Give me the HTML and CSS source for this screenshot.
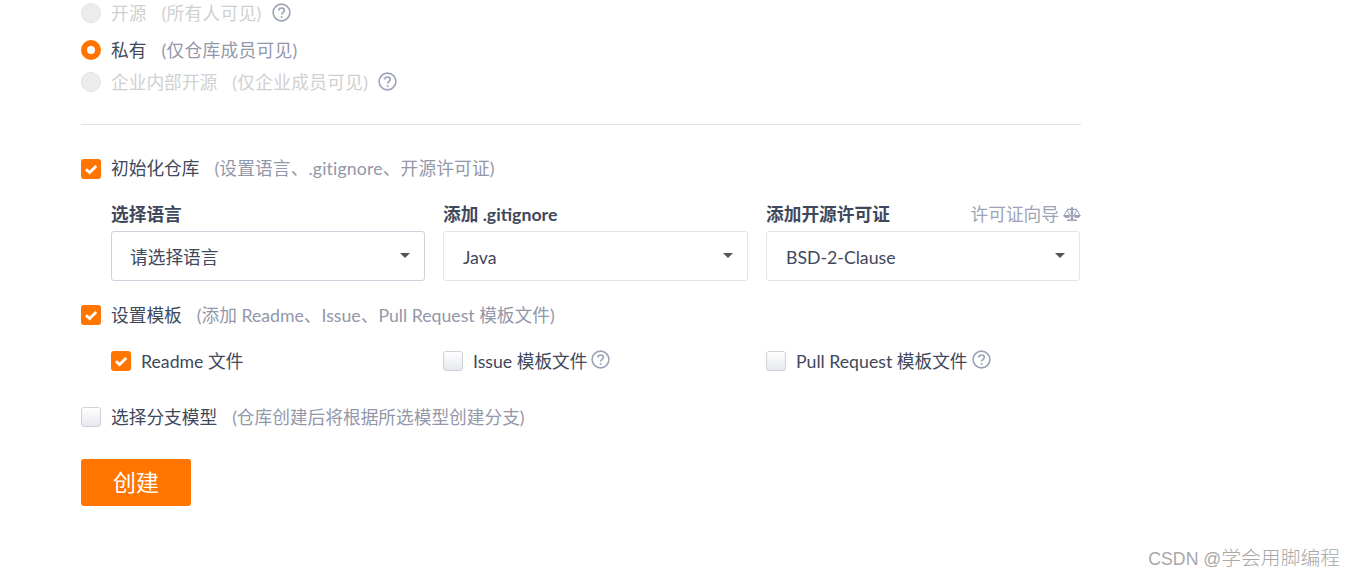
FILE: index.html
```html
<!DOCTYPE html>
<html lang="zh-CN">
<head>
<meta charset="utf-8">
<title>新建仓库</title>
<link rel="stylesheet" href="styles.css">
</head>
<body>
<svg class="defs" width="0" height="0" aria-hidden="true">
  <defs>
    <symbol id="help" viewBox="0 0 19 19">
      <circle cx="9.5" cy="9.5" r="8.4" fill="none" stroke="currentColor" stroke-width="1.6"/>
      <path d="M6.8 7.6c0-1.6 1.2-2.6 2.8-2.6s2.7 1 2.700 2.300c0 2.200-2.700 2.200-2.700 4.300" fill="none" stroke="currentColor" stroke-width="1.6"/>
      <circle cx="9.600" cy="14" r="1" fill="currentColor"/>
    </symbol>
    <symbol id="tick" viewBox="0 0 20 20">
      <path d="M5 10.200l3.600 3.400L15.200 7" fill="none" stroke="#fff" stroke-width="2.800"/>
    </symbol>
  </defs>
</svg>
<main class="form">
  <div class="opt radio-row first">
    <span class="radio off"></span>
    <span class="label faded">开源</span><span class="note faded">(所有人可见)</span>
    <svg class="help"><use href="#help"/></svg>
  </div>
  <div class="opt radio-row second">
    <span class="radio on"></span>
    <span class="label">私有</span><span class="note">(仅仓库成员可见)</span>
  </div>
  <div class="opt radio-row third">
    <span class="radio off"></span>
    <span class="label faded">企业内部开源</span><span class="note faded">(仅企业成员可见)</span>
    <svg class="help"><use href="#help"/></svg>
  </div>
  <hr class="rule">
  <div class="opt init-row">
    <span class="box checked"><svg class="tick"><use href="#tick"/></svg></span>
    <span class="label">初始化仓库</span><span class="note">(设置语言、.gitignore、开源许可证)</span>
  </div>
  <div class="grid selects">
    <div class="field">
      <div class="field-head"><span class="field-title">选择语言</span></div>
      <div class="select focus"><span class="value">请选择语言</span><i class="caret"></i></div>
    </div>
    <div class="field">
      <div class="field-head"><span class="field-title">添加 .gitignore</span></div>
      <div class="select"><span class="value">Java</span><i class="caret"></i></div>
    </div>
    <div class="field">
      <div class="field-head">
        <span class="field-title">添加开源许可证</span>
        <span class="wizard">许可证向导
          <svg class="scale" viewBox="0 0 18 15"><path d="M9 0a1.300 1.300 0 0 1 1.200 1.700H14V3h-3.800v9.500H14V14H4v-1.500h3.800V3H4V1.700h3.800A1.300 1.300 0 0 1 9 0z" fill="currentColor"/><path d="M4 3L1 8.500M4 3l3 5.500M14 3l-3 5.500M14 3l3 5.500" fill="none" stroke="currentColor" stroke-width="1"/><path d="M0.300 8h7.400c0 1.800-1.600 3-3.700 3S0.300 9.800 0.300 8zM10.300 8h7.400c0 1.800-1.600 3-3.700 3s-3.700-1.200-3.700-3z" fill="currentColor"/></svg>
        </span>
      </div>
      <div class="select"><span class="value">BSD-2-Clause</span><i class="caret"></i></div>
    </div>
  </div>
  <div class="opt tpl-row">
    <span class="box checked"><svg class="tick"><use href="#tick"/></svg></span>
    <span class="label">设置模板</span><span class="note">(添加 Readme、Issue、Pull Request 模板文件)</span>
  </div>
  <div class="grid files">
    <div class="opt"><span class="box checked"><svg class="tick"><use href="#tick"/></svg></span><span class="label">Readme 文件</span></div>
    <div class="opt"><span class="box"></span><span class="label">Issue 模板文件</span><svg class="help small"><use href="#help"/></svg></div>
    <div class="opt"><span class="box"></span><span class="label">Pull Request 模板文件</span><svg class="help small"><use href="#help"/></svg></div>
  </div>
  <div class="opt branch-row">
    <span class="box"></span>
    <span class="label">选择分支模型</span><span class="note">(仓库创建后将根据所选模型创建分支)</span>
  </div>
  <button class="submit" type="button">创建</button>
</main>
<div class="watermark"><span class="wm-latin">CSDN @</span>学会用脚编程</div>
</body>
</html>
```

FILE: styles.css
```css
* { box-sizing: border-box; }
html, body { height: 100%; }
body {
  margin: 0;
  background: #fff;
  overflow: hidden;
  position: relative;
  font-family: "Lato", "Noto Sans CJK SC", sans-serif;
  font-size: 17.7px;
  line-height: 22px;
  color: #40485b;
}
.defs { position: absolute; }
.form { width: 1000px; margin-left: 81px; display: flex; flex-direction: column; }
.opt { display: flex; align-items: center; height: 20px; white-space: nowrap; }
.first { margin-top: 3px; }
.second { margin-top: 17px; }
.third { margin-top: 12px; }
.radio { width: 20px; height: 20px; border-radius: 50%; flex: none; margin-right: 10px; }
.radio.off { background: #ececec; border: 1px solid #e2e2e2; }
.radio.on { background: #fff; border: 6px solid #ff7500; }
.box { width: 20px; height: 20px; flex: none; margin-right: 10px; border-radius: 3px; border: 1px solid #cfd2db; background: linear-gradient(#fff, #e6e8ef); }
.box.checked { background: #ff7500; border: 0; }
.tick { display: block; width: 20px; height: 20px; }
.label, .note { margin-top: 2px; }
.init-row .label, .init-row .note { margin-top: 0; }
.label { color: #40485b; }
.note { color: #9297a9; margin-left: 15px; }
.radio-row .note { letter-spacing: .33px; }
.init-row .note { letter-spacing: .15px; }
.label.faded, .note.faded { color: #d0d0d0; }
.help { width: 19px; height: 19px; color: #9da2b6; margin-left: 10px; margin-top: -1px; flex: none; }
.help.small { margin-left: 4px; margin-top: -4px; }
.rule { width: 100%; height: 1px; margin: 32px 0 34px; border: 0; background: #dfe3ea; }
.grid { display: grid; grid-template-columns: 314px 305px 314px; column-gap: 18px; margin-left: 30px; }
.selects { margin-top: 24px; }
.field-head { display: flex; justify-content: space-between; align-items: center; height: 24px; margin-bottom: 4px; }
.field-title { font-weight: 700; font-size: 17.7px; color: #40485b; }
.wizard { display: flex; align-items: center; color: #9da2b6; margin-right: -1px; gap: 4px; }
.scale { width: 18px; height: 15px; margin-top: -2px; }
.select { height: 50px; display: flex; align-items: center; justify-content: space-between; padding: 0 14px 0 19px; border: 1px solid #e3e5ec; border-radius: 3px; color: #40485b; }
.select.focus { border-color: #cfd2de; padding-left: 18px; }
.value { margin-top: 4px; }
.caret { width: 0; height: 0; border: 5px solid transparent; border-top-color: #555; border-bottom: 0; margin-top: -2px; }
.tpl-row { margin-top: 24px; }
.files { margin-top: 26px; }
.branch-row { margin-top: 36px; }
.submit { width: 110px; height: 47px; margin-top: 32px; border: 0; border-radius: 3px; background: #ff7500; color: #fff; font: inherit; font-size: 23px; padding: 0 0 2px; }
.watermark { position: absolute; right: 15px; top: 546px; font-family: "Liberation Sans", "Noto Sans CJK SC", sans-serif; font-size: 19.8px; font-weight: 300; line-height: 25px; color: #a8a8a8; white-space: nowrap; }
.wm-latin { font-size: 17.7px; }
```
